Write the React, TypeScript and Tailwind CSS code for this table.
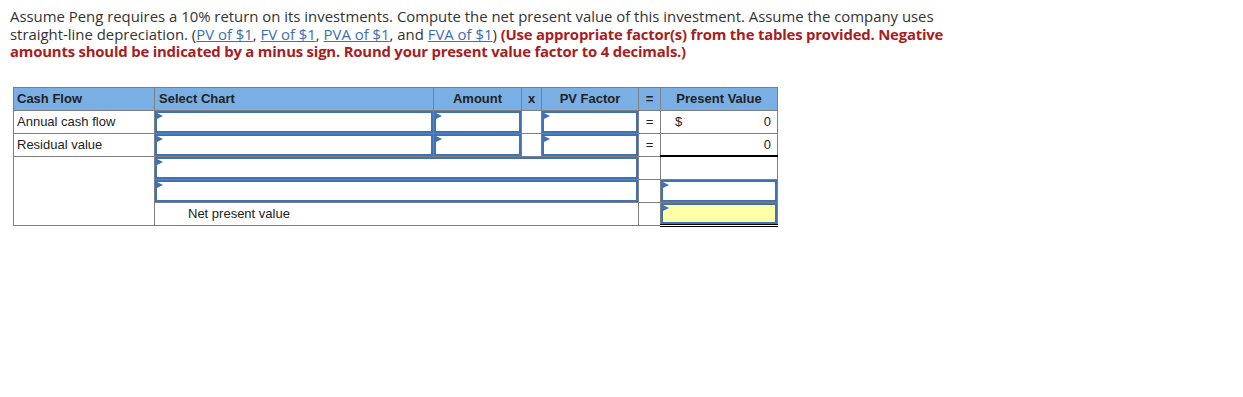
import React from "react";

const Tri = () => (
  <span className="absolute left-0 top-0 h-0 w-0 border-y-[3px] border-l-[6px] border-y-transparent border-l-[#3f72b5]" />
);

const Input = ({ yellow = false }: { yellow?: boolean }) => (
  <div
    className={`relative h-full w-full border-2 border-[#3f72b5] ${yellow ? "bg-[#ffffa8]" : "bg-white"}`}
  >
    <Tri />
  </div>
);

const cell = "border border-[#7f7f7f] p-0 h-[23px]";

export default function App() {
  return (
    <div className="min-h-[397px] bg-white" style={{ fontFamily: "'Open Sans', sans-serif" }}>
      <div className="pl-[10px] pt-[8px] text-[14.9px] leading-[17.5px] text-[#333]">
        <div className="whitespace-nowrap">
          Assume Peng requires a 10% return on its investments. Compute the net present value of this investment. Assume the company uses
        </div>
        <div className="whitespace-nowrap">
          straight-line depreciation. (
          <span className="text-[#3c6fb1] underline">PV of $1</span>,{" "}
          <span className="text-[#3c6fb1] underline">FV of $1</span>,{" "}
          <span className="text-[#3c6fb1] underline">PVA of $1</span>, and{" "}
          <span className="text-[#3c6fb1] underline">FVA of $1</span>){" "}
          <span className="font-bold tracking-[-0.2px] text-[#a81d22]">(Use appropriate factor(s) from the tables provided. Negative</span>
        </div>
        <div className="whitespace-nowrap font-bold tracking-[-0.2px] text-[#a81d22]">
          amounts should be indicated by a minus sign. Round your present value factor to 4 decimals.)
        </div>
      </div>

      <div className="pl-[13px] pt-[26px]">
        <table
          className="table-fixed border-collapse text-[13px] text-[#222]"
          style={{ fontFamily: "'Liberation Sans', Arial, sans-serif" }}
        >
          <colgroup>
            <col className="w-[141px]" />
            <col className="w-[279px]" />
            <col className="w-[88px]" />
            <col className="w-[20px]" />
            <col className="w-[97px]" />
            <col className="w-[22px]" />
            <col className="w-[117px]" />
          </colgroup>
          <thead>
            <tr className="bg-[#7aafe5] font-bold">
              <th className={`${cell} pl-[3px] text-left`}>Cash Flow</th>
              <th className={`${cell} pl-[4px] text-left`}>Select Chart</th>
              <th className={`${cell} text-center`}>Amount</th>
              <th className={`${cell} text-center`}>x</th>
              <th className={`${cell} text-center`}>PV Factor</th>
              <th className={`${cell} text-center`}>=</th>
              <th className={`${cell} text-center`}>Present Value</th>
            </tr>
          </thead>
          <tbody>
            <tr>
              <td className={`${cell} pl-[3px]`}>Annual cash flow</td>
              <td className={cell}><Input /></td>
              <td className={cell}><Input /></td>
              <td className={cell}></td>
              <td className={cell}><Input /></td>
              <td className={`${cell} text-center`}>=</td>
              <td className={`${cell} px-[6px]`}>
                <div className="flex justify-between pl-[8px]">
                  <span>$</span>
                  <span>0</span>
                </div>
              </td>
            </tr>
            <tr>
              <td className={`${cell} pl-[3px]`}>Residual value</td>
              <td className={cell}><Input /></td>
              <td className={cell}><Input /></td>
              <td className={cell}></td>
              <td className={cell}><Input /></td>
              <td className={`${cell} text-center`}>=</td>
              <td className={`${cell} border-b-2 border-b-black px-[6px] text-right`}>0</td>
            </tr>
            <tr>
              <td className={cell} rowSpan={3}></td>
              <td className={cell} colSpan={4}><Input /></td>
              <td className={cell}></td>
              <td className={cell}></td>
            </tr>
            <tr>
              <td className={cell} colSpan={4}><Input /></td>
              <td className={cell}></td>
              <td className={cell}><Input /></td>
            </tr>
            <tr>
              <td className={`${cell} pl-[33px]`} colSpan={4}>Net present value</td>
              <td className={cell}></td>
              <td className={`${cell} border-b-[3px] border-double border-b-black`}>
                <Input yellow />
              </td>
            </tr>
          </tbody>
        </table>
      </div>
    </div>
  );
}
